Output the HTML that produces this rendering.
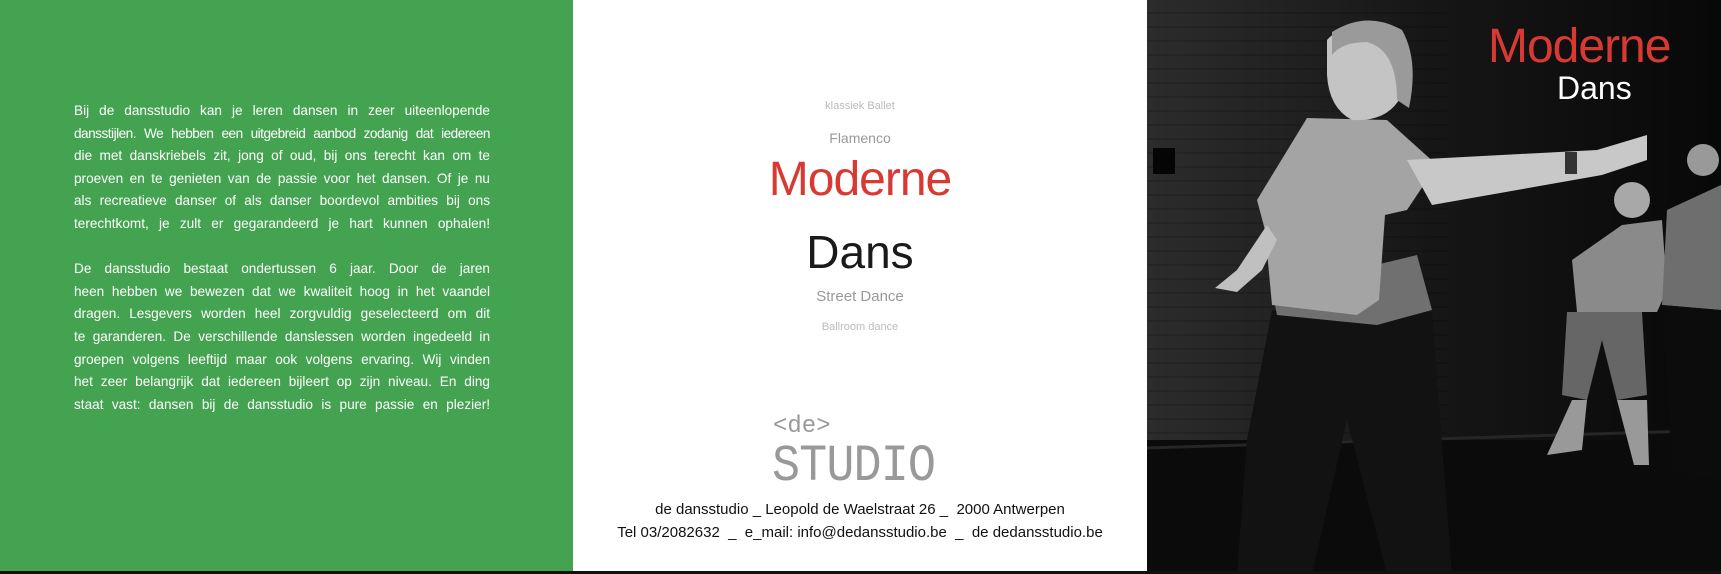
<!DOCTYPE html>
<html><head><meta charset="utf-8"><style>
*{margin:0;padding:0;box-sizing:border-box}
body{width:1721px;height:574px;overflow:hidden;background:#fff;font-family:"Liberation Sans",sans-serif;position:relative}
.green{position:absolute;left:0;top:0;width:573px;height:571px;background:#44a350}
.txt{position:absolute;left:74px;top:100px;width:416px;color:#fff;font-size:13.6px;line-height:22.6px}
.txt div{text-align:justify;text-align-last:justify;white-space:normal;height:22.6px;overflow:visible}
.txt .sp{height:22.6px}
.t{letter-spacing:-0.5px;word-spacing:-1px}
.c{position:absolute;left:573px;width:574px;text-align:center;white-space:nowrap}
.photo{position:absolute;left:1147px;top:0;width:574px;height:574px;background:#111;overflow:hidden}
.bar{position:absolute;left:0;top:571px;width:1721px;height:3px;background:#111}
</style></head><body>
<div class="green"></div>
<div class="txt">
<div>Bij de dansstudio kan je leren dansen in zeer uiteenlopende</div>
<div class="t">dansstijlen. We hebben een uitgebreid aanbod zodanig dat iedereen</div>
<div>die met danskriebels zit, jong of oud, bij ons terecht kan om te</div>
<div>proeven en te genieten van de passie voor het dansen. Of je nu</div>
<div>als recreatieve danser of als danser boordevol ambities bij ons</div>
<div>terechtkomt, je zult er gegarandeerd je hart kunnen ophalen!</div>
<div class="sp"></div>
<div>De dansstudio bestaat ondertussen 6 jaar. Door de jaren</div>
<div>heen hebben we bewezen dat we kwaliteit hoog in het vaandel</div>
<div>dragen. Lesgevers worden heel zorgvuldig geselecteerd om dit</div>
<div>te garanderen. De verschillende danslessen worden ingedeeld in</div>
<div>groepen volgens leeftijd maar ook volgens ervaring. Wij vinden</div>
<div>het zeer belangrijk dat iedereen bijleert op zijn niveau. En ding</div>
<div>staat vast: dansen bij de dansstudio is pure passie en plezier!</div>
</div>
<div class="c" style="top:100px;font-size:11px;color:#bbb">klassiek Ballet</div>
<div class="c" style="top:130px;font-size:14px;color:#999">Flamenco</div>
<div class="c" style="top:152px;font-size:48px;color:#d83a33;letter-spacing:-1px">Moderne</div>
<div class="c" style="top:225px;font-size:46px;color:#1a1a1a">Dans</div>
<div class="c" style="top:288px;font-size:15px;color:#999">Street Dance</div>
<div class="c" style="top:321px;font-size:11px;color:#bbb">Ballroom dance</div>
<div style="position:absolute;left:773px;top:413px;font-size:24px;color:#999;font-family:'Liberation Mono',monospace">&lt;de&gt;</div>
<div style="position:absolute;left:772px;top:437px;font-size:52px;color:#999;font-family:'Liberation Mono',monospace;transform:scaleX(0.9);transform-origin:left;letter-spacing:-1px">STUDIO</div>
<div class="c" style="top:501px;font-size:15px;color:#111">de dansstudio _ Leopold de Waelstraat 26 _ &nbsp;2000 Antwerpen</div>
<div class="c" style="top:524px;font-size:15px;color:#111">Tel 03/2082632 &nbsp;_ &nbsp;e_mail: info@dedansstudio.be &nbsp;_ &nbsp;de dedansstudio.be</div>
<div class="photo">
<svg width="574" height="574" viewBox="0 0 574 574">
<defs>
<linearGradient id="w" x1="0" y1="0" x2="1" y2="0"><stop offset="0" stop-color="#2c2c2c"/><stop offset="0.5" stop-color="#161616"/><stop offset="1" stop-color="#080808"/></linearGradient>
<pattern id="br" width="40" height="14" patternUnits="userSpaceOnUse"><line x1="0" y1="13" x2="40" y2="13" stroke="#000" stroke-opacity=".3"/></pattern>
</defs>
<rect width="574" height="440" fill="url(#w)"/>
<rect width="300" height="440" fill="url(#br)"/>
<rect y="440" width="574" height="134" fill="#0b0b0b"/>
<line x1="0" y1="448" x2="574" y2="430" stroke="#262626" stroke-width="3"/>
<rect x="6" y="148" width="22" height="26" fill="#050505"/>
<path d="M475 225 L515 220 L520 290 L510 312 L430 312 L425 260 Z" fill="#8a8a8a"/>
<circle cx="485" cy="200" r="18" fill="#a8a8a8"/>
<path d="M420 312 L495 312 L500 395 L470 400 L455 340 L440 400 L415 395 Z" fill="#666"/>
<path d="M425 400 L440 400 L435 450 L400 455 Z M470 400 L500 400 L502 465 L487 465 Z" fill="#999"/>
<path d="M520 210 L574 185 L574 310 L515 305 Z" fill="#6e6e6e"/>
<path d="M515 305 L574 310 L574 480 L525 470 Z" fill="#0c0c0c"/>
<circle cx="556" cy="160" r="16" fill="#999"/>
<path d="M100 440 L125 310 L285 312 L305 574 L240 574 L200 420 L165 574 L90 574 Z" fill="#121212"/>
<path d="M125 290 L130 315 L230 325 L285 310 L270 255 Z" fill="#707070"/>
<path d="M160 118 L240 120 L290 165 L260 210 L238 215 L232 300 L210 315 L125 305 L118 230 L110 200 Z" fill="#a4a4a4"/>
<path d="M260 160 L450 150 L500 135 L500 160 L455 175 L285 205 Z" fill="#c8c8c8"/>
<path d="M120 225 L90 270 L68 288 L90 292 L115 270 L130 240 Z" fill="#c0c0c0"/>
<path d="M180 40 Q200 18 238 32 Q258 60 252 100 Q238 122 205 120 Q182 108 180 75 Z" fill="#c4c4c4"/>
<path d="M185 32 Q220 10 255 30 Q272 60 262 108 L250 100 Q250 50 220 42 Q195 42 185 55 Z" fill="#9a9a9a"/>
<rect x="418" y="152" width="12" height="22" fill="#333"/>
<text x="341" y="62" fill="#d83a33" font-family="Liberation Sans" font-size="48" letter-spacing="-1">Moderne</text>
<text x="410" y="99" fill="#fff" font-family="Liberation Sans" font-size="32">Dans</text>
</svg>
</div>
<div class="bar"></div>
</body></html>
